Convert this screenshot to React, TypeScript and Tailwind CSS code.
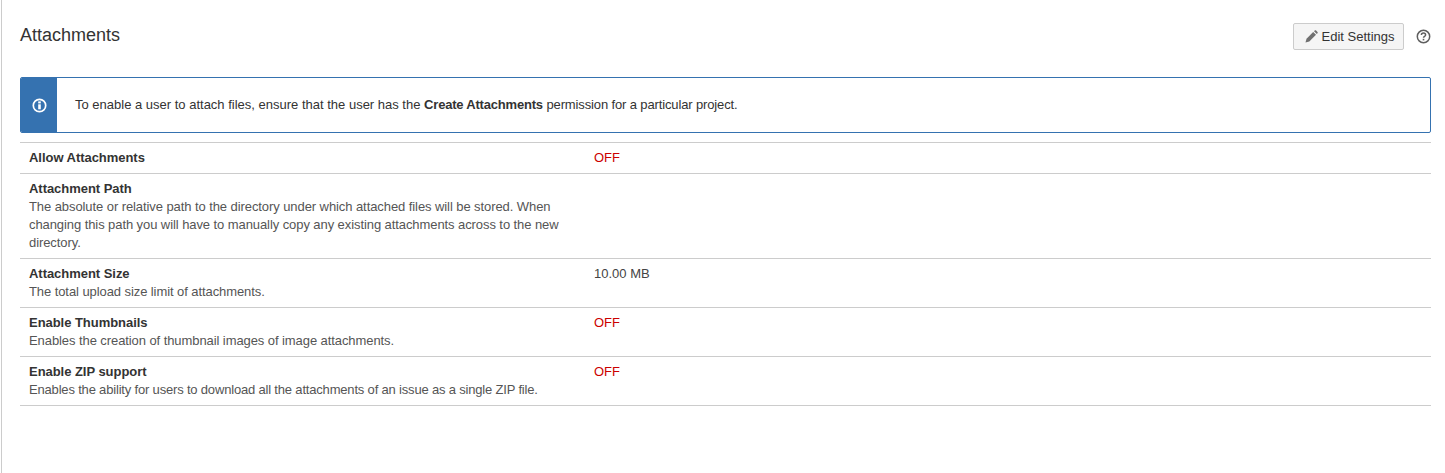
interface SettingRow {
    title: string;
    description?: string;
    value?: string;
    off?: boolean;
    tight?: boolean;
}

const rows: SettingRow[] = [
    { title: "Allow Attachments", value: "OFF", off: true },
    {
        title: "Attachment Path",
        description:
            "The absolute or relative path to the directory under which attached files will be stored. When changing this path you will have to manually copy any existing attachments across to the new directory.",
    },
    { title: "Attachment Size", description: "The total upload size limit of attachments.", value: "10.00 MB" },
    { title: "Enable Thumbnails", description: "Enables the creation of thumbnail images of image attachments.", value: "OFF", off: true },
    {
        title: "Enable ZIP support",
        description: "Enables the ability for users to download all the attachments of an issue as a single ZIP file.",
        value: "OFF",
        off: true,
        tight: true,
    },
];

function Row({ title, description, value, off, tight }: SettingRow) {
    return (
        <div className="flex border-b border-[#cccccc] py-[6px] pl-[9px]">
            <div className="w-[565px] shrink-0">
                <div className="font-bold tracking-[-0.04px]">{title}</div>
                {description && (
                    <div className={tight ? "w-[540px] tracking-[-0.18px] whitespace-nowrap text-[#555555]" : "w-[540px] tracking-[-0.08px] text-[#555555]"}>
                        {description}
                    </div>
                )}
            </div>
            <div className={off ? "text-[#cc0000]" : "text-[#444444]"}>{value}</div>
        </div>
    );
}

export default function App() {
    return (
        <div className="h-[473px] w-[1445px] overflow-hidden bg-white font-['Liberation_Sans',Arial,sans-serif] text-[13px] leading-[18px] text-[#333333]">
            <div className="ml-px h-full border-l border-[#cccccc] pr-[14px] pl-[18px]">
                <div className="flex h-[77px] items-start justify-between">
                    <h1 className="pt-[23px] text-[18px] leading-[24px] font-normal">Attachments</h1>
                    <div className="flex items-center pt-[23px]">
                        <button className="flex h-[27px] w-[111px] items-center justify-center gap-[4px] rounded-[2px] border border-[#cccccc] bg-[#f5f5f5] pl-[2px] text-[#333333]">
                            <svg width="13" height="13" viewBox="0 0 13 13">
                                <path d="M0.5 12.5l1-3.8L8.2 2l2.8 2.8-6.7 6.7z" fill="#707070" />
                                <path d="M9 1.2l.7-.7c.4-.4 1-.4 1.4 0l1.4 1.4c.4.4.4 1 0 1.4l-.7.7z" fill="#707070" />
                            </svg>
                            Edit Settings
                        </button>
                        <svg className="ml-[12px]" width="15" height="15" viewBox="0 0 15 15" fill="none">
                            <circle cx="7.5" cy="7.5" r="6.2" stroke="#5f5f5f" strokeWidth="1.5" />
                            <path d="M5.4 6c0-1.2 1-1.9 2.1-1.9s2.1.7 2.1 1.8c0 1.5-2.1 1.5-2.1 2.9" stroke="#5f5f5f" strokeWidth="1.5" />
                            <rect x="6.7" y="9.8" width="1.6" height="1.6" fill="#5f5f5f" />
                        </svg>
                    </div>
                </div>
                <div className="flex h-[56px] overflow-hidden rounded-[2px] border border-[#3572b0]">
                    <div className="flex w-[36px] shrink-0 items-center justify-center bg-[#3572b0]">
                        <svg width="15" height="15" viewBox="0 0 15 15" fill="none">
                            <circle cx="7.5" cy="7.5" r="6.2" stroke="white" strokeWidth="1.7" />
                            <rect x="6.2" y="6.3" width="2.6" height="5" fill="white" />
                            <rect x="6.2" y="3.4" width="2.6" height="2" fill="white" />
                        </svg>
                    </div>
                    <div className="flex items-center pl-[18px]">
                        <span>
                            To enable a user to attach files, ensure that the user has the{" "}
                            <b className="tracking-[-0.2px]">Create Attachments</b>{" "}
                            <span className="tracking-[-0.13px]">permission for a particular project.</span>
                        </span>
                    </div>
                </div>
                <div className="mt-[9px] border-t border-[#cccccc]">
                    {rows.map((row) => (
                        <Row key={row.title} {...row} />
                    ))}
                </div>
            </div>
        </div>
    );
}
